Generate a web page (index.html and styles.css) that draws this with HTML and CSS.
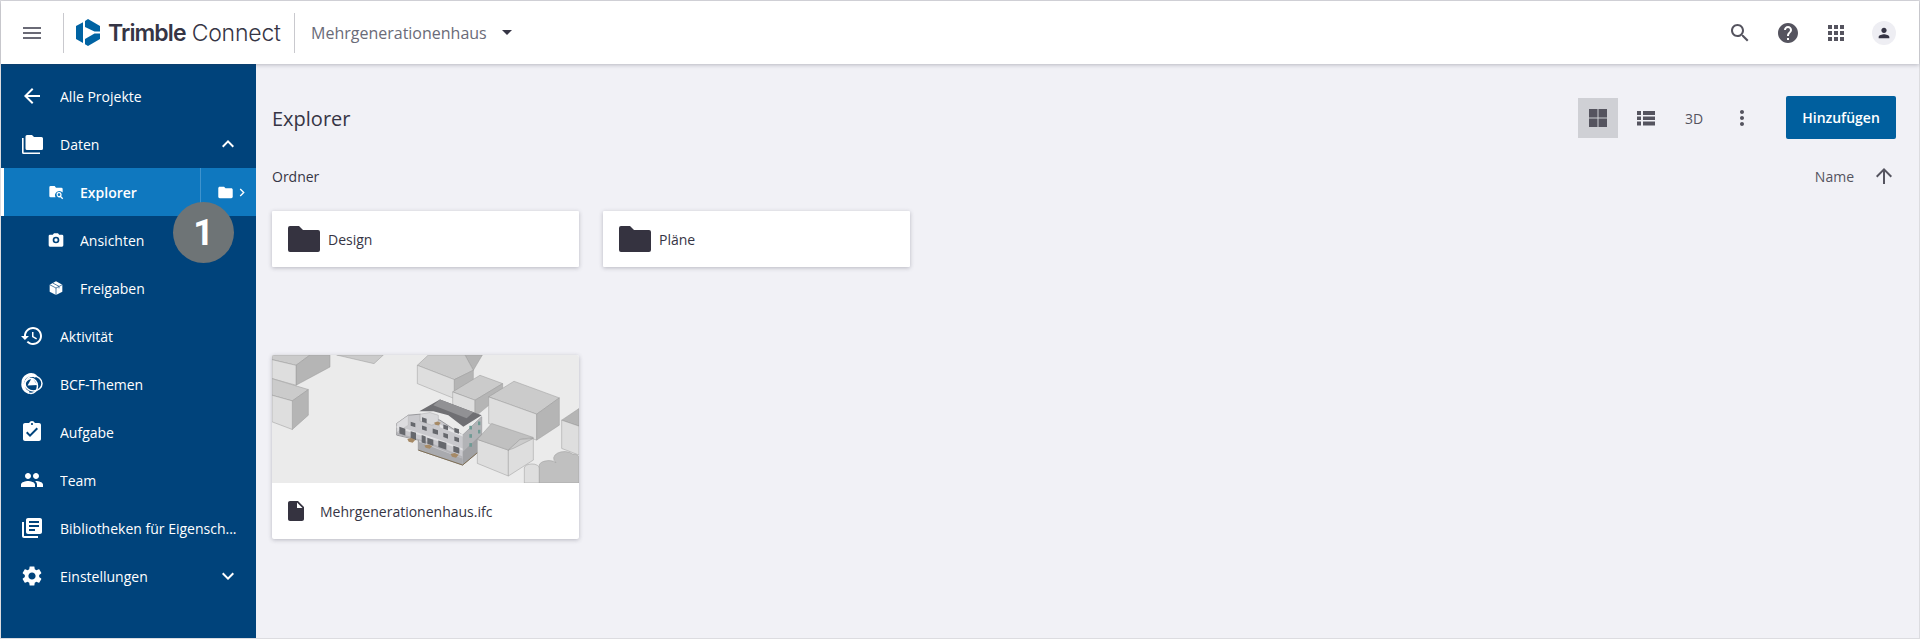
FILE: index.html
```html
<!DOCTYPE html>
<html lang="de">

<head>
    <meta charset="UTF-8">
    <title>Trimble Connect</title>
    <link rel="stylesheet" href="styles.css">
</head>

<body>

    <div class="page">
        <header class="topbar">
            <svg class="icon menu-icon" viewBox="0 0 24 24"><path d="M3 18h18v-2H3v2zm0-5h18v-2H3v2zm0-7v2h18V6H3z"/></svg>
            <div class="brand">
                <svg class="logo" viewBox="0 0 24 27">
                    <path d="M9 2l3-2 12 7v5.500h-5.500L9 8z"/>
                    <path d="M24 14.500V20l-12 7-3-1.700V20l9.500-5.500z"/>
                    <path d="M7 3.300V8v11.500V24l-7-4V7z"/>
                </svg>
                <span class="brand-main">Trimble</span>
                <span class="brand-sub">Connect</span>
            </div>
            <div class="project">
                <span>Mehrgenerationenhaus</span>
                <span class="caret"></span>
            </div>
            <div class="topbar-actions">
                <button class="top-btn"><svg class="icon" viewBox="0 0 24 24"><path d="M15.500 14h-.79l-.28-.27C15.410 12.590 16 11.110 16 9.500 16 5.910 13.090 3 9.500 3S3 5.910 3 9.500 5.910 16 9.500 16c1.610 0 3.090-.59 4.230-1.570l.27.28v.79l5 4.990L20.490 19l-4.990-5zm-6 0C7.010 14 5 11.990 5 9.500S7.010 5 9.500 5 14 7.010 14 9.500 11.990 14 9.500 14z"/></svg></button>
                <button class="top-btn"><svg class="icon" viewBox="0 0 24 24"><path d="M12 2C6.480 2 2 6.480 2 12s4.480 10 10 10 10-4.480 10-10S17.520 2 12 2zm1 17h-2v-2h2v2zm2.070-7.750l-.9.920C13.450 12.900 13 13.500 13 15h-2v-.5c0-1.100.45-2.100 1.170-2.830l1.240-1.260c.37-.36.59-.86.59-1.410 0-1.100-.9-2-2-2s-2 .9-2 2H8c0-2.210 1.790-4 4-4s4 1.790 4 4c0 .88-.36 1.680-.93 2.250z"/></svg></button>
                <button class="top-btn"><svg class="icon" viewBox="0 0 24 24"><path d="M4 8h4V4H4v4zm6 12h4v-4h-4v4zm-6 0h4v-4H4v4zm0-6h4v-4H4v4zm6 0h4v-4h-4v4zm6-10v4h4V4h-4zm-6 4h4V4h-4v4zm6 6h4v-4h-4v4zm0 6h4v-4h-4v4z"/></svg></button>
                <button class="top-btn"><span class="avatar"><svg class="icon icon-small" viewBox="0 0 24 24"><path d="M12 12c2.210 0 4-1.790 4-4s-1.790-4-4-4-4 1.790-4 4 1.790 4 4 4zm0 2c-2.670 0-8 1.340-8 4v2h16v-2c0-2.660-5.330-4-8-4z"/></svg></span></button>
            </div>
        </header>

        <div class="body-row">
            <nav class="sidebar">
                <a class="nav-item">
                    <svg class="icon" viewBox="0 0 24 24"><path d="M20 11H7.830l5.590-5.590L12 4l-8 8 8 8 1.410-1.410L7.830 13H20v-2z"/></svg>
                    <span class="nav-label">Alle Projekte</span>
                </a>
                <a class="nav-item">
                    <svg class="icon" viewBox="0 0 24 24"><path d="M2 6h1.600v14.400H20V22H3.500A1.500 1.500 0 0 1 2 20.500z"/><path d="M7 3h5l2 2h7.500A1.500 1.500 0 0 1 23 6.500v10a1.500 1.500 0 0 1-1.500 1.500H7a1.500 1.500 0 0 1-1.500-1.500v-12A1.500 1.500 0 0 1 7 3z"/></svg>
                    <span class="nav-label">Daten</span>
                    <svg class="icon nav-arrow" viewBox="0 0 24 24"><path d="M12 8l-6 6 1.410 1.410L12 10.830l4.590 4.580L18 14z"/></svg>
                </a>
                <a class="nav-item sub active">
                    <svg class="icon icon-small" viewBox="0 0 24 24"><path d="M10 3l2 2.500h8A2 2 0 0 1 22 7.500v5.300A6.500 6.500 0 0 0 11.300 20H4a2 2 0 0 1-2-2V5a2 2 0 0 1 2-2z"/><path fill-rule="evenodd" d="M16.500 12a4 4 0 0 1 3.300 6.300l3 3-1.400 1.400-3-3A4 4 0 1 1 16.500 12zm0 2a2 2 0 1 0 0 4 2 2 0 0 0 0-4z"/></svg>
                    <span class="nav-label">Explorer</span>
                    <span class="tree-toggle">
                        <svg class="icon icon-folder" viewBox="2 3 20 18"><path d="M10 4H4c-1.100 0-2 .9-2 2v12c0 1.100.9 2 2 2h16c1.100 0 2-.9 2-2V8c0-1.100-.9-2-2-2h-8l-2-2z"/></svg>
                        <svg class="icon icon-chev" viewBox="6 5 12 14"><path d="M10 6L8.590 7.410 13.170 12l-4.580 4.590L10 18l6-6z"/></svg>
                    </span>
                </a>
                <a class="nav-item sub">
                    <svg class="icon icon-small" viewBox="0 0 24 24"><path fill-rule="evenodd" d="M9 2L7.170 4H3a2 2 0 0 0-2 2v14a2 2 0 0 0 2 2h18a2 2 0 0 0 2-2V6a2 2 0 0 0-2-2h-4.170L15 2H9zm3 15a5 5 0 1 1 0-10 5 5 0 0 1 0 10z"/><circle cx="12" cy="12" r="2.500"/></svg>
                    <span class="nav-label">Ansichten</span>
                </a>
                <a class="nav-item sub">
                    <svg class="icon icon-small" viewBox="0 0 24 24"><path d="M12 2l9.500 5v10.500L12 22.500l-9.500-5V7z"/><path class="cube-lines" d="M2.500 7l9.500 5 9.500-5M12 12v10.500M7 4.500l9.500 5v3"/></svg>
                    <span class="nav-label">Freigaben</span>
                </a>
                <a class="nav-item">
                    <svg class="icon" viewBox="0 0 24 24"><path d="M13 3c-4.970 0-9 4.030-9 9H1l3.890 3.890.07.14L9 12H6c0-3.870 3.130-7 7-7s7 3.130 7 7-3.130 7-7 7c-1.930 0-3.680-.79-4.940-2.060l-1.420 1.420C8.270 19.990 10.510 21 13 21c4.970 0 9-4.030 9-9s-4.030-9-9-9zm-1 5v5l4.280 2.540.72-1.210-3.500-2.080V8H12z"/></svg>
                    <span class="nav-label">Aktivität</span>
                </a>
                <a class="nav-item">
                    <svg class="icon" viewBox="0 0 24 24">
                        <path class="bcf-ring" d="M3 11a8 8 0 0 1 13-6.500M9 20.500A8 8 0 0 1 3 11"/>
                        <ellipse class="bcf-ring thin" cx="13.500" cy="11.500" rx="8.500" ry="7.500"/>
                        <ellipse class="bcf-ring thin" cx="11" cy="14" rx="6.500" ry="7.500"/>
                        <path d="M12 5.500l5.500 7.500-10 .5z"/>
                    </svg>
                    <span class="nav-label">BCF-Themen</span>
                </a>
                <a class="nav-item">
                    <svg class="icon" viewBox="0 0 24 24"><path d="M19 3h-4.180C14.400 1.840 13.300 1 12 1c-1.300 0-2.400.84-2.820 2H5c-1.100 0-2 .9-2 2v14c0 1.100.9 2 2 2h14c1.100 0 2-.9 2-2V5c0-1.100-.9-2-2-2zm-7 0c.55 0 1 .45 1 1s-.45 1-1 1-1-.45-1-1 .45-1 1-1zm-2 14l-4-4 1.410-1.410L10 14.170l6.590-6.590L18 9l-8 8z"/></svg>
                    <span class="nav-label">Aufgabe</span>
                </a>
                <a class="nav-item">
                    <svg class="icon" viewBox="0 0 24 24"><path d="M16 11c1.660 0 2.990-1.340 2.990-3S17.660 5 16 5c-1.660 0-3 1.340-3 3s1.340 3 3 3zm-8 0c1.660 0 2.990-1.340 2.990-3S9.660 5 8 5C6.340 5 5 6.340 5 8s1.340 3 3 3zm0 2c-2.330 0-7 1.170-7 3.500V19h14v-2.500c0-2.330-4.670-3.500-7-3.500zm8 0c-.29 0-.62.02-.97.05 1.160.84 1.970 1.970 1.970 3.450V19h6v-2.500c0-2.330-4.670-3.500-7-3.500z"/></svg>
                    <span class="nav-label">Team</span>
                </a>
                <a class="nav-item">
                    <svg class="icon" viewBox="0 0 24 24"><path d="M4 6H2v14c0 1.100.9 2 2 2h14v-2H4V6zm16-4H8c-1.100 0-2 .9-2 2v12c0 1.100.9 2 2 2h12c1.100 0 2-.9 2-2V4c0-1.100-.9-2-2-2zm-1 9H9V9h10v2zm-4 4H9v-2h6v2zm4-8H9V5h10v2z"/></svg>
                    <span class="nav-label">Bibliotheken für Eigensch...</span>
                </a>
                <a class="nav-item">
                    <svg class="icon" viewBox="0 0 24 24"><path d="M19.140 12.940c.04-.3.06-.61.06-.94 0-.32-.02-.64-.07-.94l2.030-1.580c.18-.14.23-.41.12-.61l-1.920-3.320c-.12-.22-.37-.29-.59-.22l-2.390.96c-.5-.38-1.030-.7-1.620-.94l-.36-2.540c-.04-.24-.24-.41-.48-.41h-3.840c-.24 0-.43.17-.47.41l-.36 2.540c-.59.24-1.130.57-1.620.94l-2.390-.96c-.22-.08-.47 0-.59.22L2.740 8.870c-.12.21-.08.47.12.61l2.030 1.580c-.05.3-.09.63-.09.94s.02.64.07.94l-2.030 1.580c-.18.14-.23.41-.12.61l1.920 3.320c.12.22.37.29.59.22l2.390-.96c.5.38 1.030.7 1.620.94l.36 2.540c.05.24.24.41.48.41h3.840c.24 0 .44-.17.47-.41l.36-2.540c.59-.24 1.130-.56 1.620-.94l2.390.96c.22.08.47 0 .59-.22l1.920-3.320c.12-.22.07-.47-.12-.61l-2.010-1.580zM12 15.600c-1.980 0-3.600-1.620-3.600-3.600s1.620-3.600 3.600-3.600 3.600 1.620 3.600 3.600-1.620 3.600-3.600 3.600z"/></svg>
                    <span class="nav-label">Einstellungen</span>
                    <svg class="icon nav-arrow" viewBox="0 0 24 24"><path d="M16.590 8.590L12 13.170 7.410 8.590 6 10l6 6 6-6z"/></svg>
                </a>

                <!-- step marker over the sidebar -->
                <div class="step-badge">1</div>
            </nav>

            <main class="content">
                <div class="toolbar">
                    <h1>Explorer</h1>
                    <div class="view-btns">
                        <button class="view-btn selected"><svg class="icon" viewBox="0 0 24 24"><path d="M3 3h8.500v8.500H3zM12.500 3H21v8.500h-8.500zM3 12.500h8.500V21H3zM12.500 12.500H21V21h-8.500z"/></svg></button>
                        <button class="view-btn"><svg class="icon" viewBox="0 0 24 24"><path d="M3 5h4v4H3zM9 5h12v4H9zM3 10.500h4v3.500H3zM9 10.500h12v3.500H9zM3 15.500h4v4H3zM9 15.500h12v4H9z"/></svg></button>
                        <button class="view-btn text-btn">3D</button>
                        <button class="view-btn"><svg class="icon" viewBox="0 0 24 24"><path d="M12 8c1.100 0 2-.9 2-2s-.9-2-2-2-2 .9-2 2 .9 2 2 2zm0 2c-1.100 0-2 .9-2 2s.9 2 2 2 2-.9 2-2-.9-2-2-2zm0 6c-1.100 0-2 .9-2 2s.9 2 2 2 2-.9 2-2-.9-2-2-2z"/></svg></button>
                    </div>
                    <button class="add-btn">Hinzufügen</button>
                </div>

                <div class="section-head">
                    <span>Ordner</span>
                    <div class="sort">
                        <span>Name</span>
                        <svg class="icon" viewBox="0 0 24 24"><path d="M4 12l1.410 1.410L11 7.830V20h2V7.830l5.580 5.590L20 12l-8-8-8 8z"/></svg>
                    </div>
                </div>

                <div class="folder-grid">
                    <div class="card folder-card">
                        <svg class="folder-icon" viewBox="0 0 32 26"><path d="M0 2a2 2 0 0 1 2-2h9l4 4h15a2 2 0 0 1 2 2v18a2 2 0 0 1-2 2H2a2 2 0 0 1-2-2z"/></svg>
                        <span>Design</span>
                    </div>
                    <div class="card folder-card">
                        <svg class="folder-icon" viewBox="0 0 32 26"><path d="M0 2a2 2 0 0 1 2-2h9l4 4h15a2 2 0 0 1 2 2v18a2 2 0 0 1-2 2H2a2 2 0 0 1-2-2z"/></svg>
                        <span>Pläne</span>
                    </div>
                </div>

                <div class="card file-card">
                    <svg class="thumb" viewBox="36 44 921 385" preserveAspectRatio="none">
                        <rect x="36" y="44" width="921" height="385" fill="#ebebeb"/>
                        <g stroke="#9a9a9a" stroke-width="1.500">
                            <!-- top left blocks -->
                            <path class="face-top" d="M36 44h114l-42 31-72-17z"/>
                            <path class="face-dark" d="M108 75l42-31h60v36l-102 55z"/>
                            <path class="face-light" d="M36 58l72 17v60l-72-20z"/>
                            <path class="face-top" d="M36 115l109 33-48 34-61-17z"/>
                            <path class="face-dark" d="M145 148v77l-48 43v-86z"/>
                            <path class="face-light" d="M36 165l61 17v86l-61-23z"/>
                            <path class="face-top" d="M230 44h140l-28 26z"/>
                            <!-- blocks behind the building -->
                            <path class="face-dark" d="M615 44h52l-27 46z"/>
                            <path class="face-top" d="M472 75l33-31h110l25 46-57 28z"/>
                            <path class="face-light" d="M472 75l111 43v57l-111-45z"/>
                            <path class="face-dark" d="M640 90v55l-57 30v-57z"/>
                            <path class="face-top" d="M578 155l82-50 68 25-83 50z"/>
                            <path class="face-light" d="M578 155l67 25v50l-67-30z"/>
                            <path class="face-dark" d="M645 180l83-50v30l-83 70z"/>
                            <path class="face-top" d="M686 170l76-47 136 50-68 49z"/>
                            <path class="face-light" d="M686 170l144 52v78l-144-50z"/>
                            <path class="face-dark" d="M830 222l68-49v82l-68 45z"/>
                            <!-- right edge -->
                            <path class="face-dark" d="M905 240l52-35v53z"/>
                            <path class="face-light" d="M905 240l52 18v87l-52-20z"/>
                            <path class="face-light" d="M793 429v-45a22 12 0 0 1 45 0v45z"/>
                            <path class="face-mid" d="M838 380a28 15 0 0 1 50-12 28 18 0 0 1 50-26 20 20 0 0 1 19 8v79H838z"/>
                        </g>

                        <!-- the model itself -->
                        <g transform="translate(390 165)">
                            <path d="M20 85l35-25 35-3 60 18 68 45 57-55v97l-57 48L85 165v-30L20 120z" fill="#c9c9cd" stroke="#77777b" stroke-width="2"/>
                            <path d="M218 120l57-55v50l-57 55z" fill="#b2b3b6"/>
                            <path d="M218 170l57-55v47l-57 48z" fill="#a0a1a4"/>
                            <path d="M85 140l133 50v20L85 165z" fill="#a9aaae"/>
                            <path d="M85 165l133 45 57-48" fill="none" stroke="#7f6f55" stroke-width="3"/>
                            <path d="M88 48l62-35 125 47-55 35-45-35-45-12z" fill="#6f6f73"/>
                            <path d="M130 30l20-17 100 38-20 18z" fill="#919194"/>
                            <path d="M90 57l30-5 25 8v25l-20 5-35-12z" fill="#d8d8da" stroke="#8d8d90"/>
                            <path d="M20 85l35-25v30L20 112z" fill="#dcdcdf" stroke="#aaa"/>
                            <path d="M150 88l68 30v6l-68-28z" fill="#e6e6e8"/>
                            <path d="M20 92l130 42 68 26v6l-68-26L20 98z" fill="#e2e2e4"/>
                            <path d="M20 112l100 30 98 42v6L85 135 20 118z" fill="#b4b4b8"/>
                            <g fill="#66686d">
                                <rect width="14" height="12" transform="translate(62 80) skewY(18)"/>
                                <rect width="14" height="12" transform="translate(96 91) skewY(18)"/>
                                <rect width="16" height="14" transform="translate(128 100) skewY(18)"/>
                                <rect width="14" height="13" transform="translate(160 88) skewY(18)"/>
                                <rect width="14" height="13" transform="translate(193 98) skewY(18)"/>
                                <rect width="14" height="13" transform="translate(160 113) skewY(18)"/>
                                <rect width="14" height="13" transform="translate(193 124) skewY(18)"/>
                                <rect width="14" height="14" transform="translate(96 66) skewY(18)"/>
                                <rect width="18" height="20" transform="translate(28 95) skewY(18)"/>
                                <rect width="16" height="22" transform="translate(62 108) skewY(18)"/>
                                <rect width="12" height="22" transform="translate(95 120) skewY(18)"/>
                                <rect width="24" height="20" transform="translate(145 136) skewY(18)"/>
                                <rect width="18" height="18" transform="translate(190 152) skewY(18)"/>
                                <rect width="18" height="18" transform="translate(112 128) skewY(18)"/>
                            </g>
                            <g fill="#6f9a94">
                                <rect x="238" y="92" width="8" height="11"/>
                                <rect x="264" y="79" width="7" height="11"/>
                                <rect x="238" y="117" width="8" height="11"/>
                                <rect x="264" y="104" width="7" height="11"/>
                                <rect x="238" y="144" width="8" height="11"/>
                            </g>
                            <g fill="#a68a66">
                                <path d="M52 132l12-3 12 5-8 9-12-3z"/>
                                <path d="M103 151l12-3 12 5-8 8-12-3z"/>
                                <path d="M182 177l12-3 12 5-8 9-12-3z"/>
                                <path d="M132 83l10-4 10 4-6 8-10-2z"/>
                            </g>
                        </g>

                        <!-- house in front of the model -->
                        <g stroke="#9a9a9a" stroke-width="1.500">
                            <path class="face-light" d="M652 298l93 32v78l-93-38z"/>
                            <path class="face-light" d="M745 330l40-30 35-5v65l-75 48z"/>
                            <path class="face-mid" d="M652 298l43-48 90 30 35 12-40 6-35 32z"/>
                            <path class="face-top" d="M745 330l35-32 40-3-60 30z"/>
                        </g>
                    </svg>
                    <div class="file-row">
                        <svg class="file-icon" viewBox="4 2 16 20"><path d="M6 2c-1.100 0-1.990.9-1.990 2L4 20c0 1.100.89 2 1.990 2H18c1.100 0 2-.9 2-2V8l-6-6H6zm7 7V3.500L18.500 9H13z"/></svg>
                        <span>Mehrgenerationenhaus.ifc</span>
                    </div>
                </div>
            </main>
        </div>
    </div>

</body>

</html>
```

FILE: styles.css
```css
* {
    margin: 0;
    padding: 0;
    box-sizing: border-box;
}

body {
    font-family: "Open Sans", sans-serif;
    font-size: 14px;
    color: #363545;
    height: 639px;
    overflow: hidden;
}

button {
    font-family: inherit;
    border: none;
    background: none;
    cursor: pointer;
}

.page {
    height: 639px;
    border: 1px solid #dcdce0;
    display: flex;
    flex-direction: column;
}

.icon {
    width: 24px;
    height: 24px;
    fill: currentColor;
    flex-shrink: 0;
}

.icon-small {
    width: 16px;
    height: 16px;
}

/* top bar */
.topbar {
    position: relative;
    z-index: 2;
    height: 63px;
    flex-shrink: 0;
    background: #fff;
    box-shadow: 0 1px 4px rgba(54, 53, 69, 0.3);
    display: flex;
    align-items: center;
    padding: 0 17px 0 19px;
}

.menu-icon {
    color: #6a6a76;
}

.brand {
    height: 40px;
    margin-left: 19px;
    padding: 0 12px;
    border-left: 1px solid #c9c9ce;
    border-right: 1px solid #c9c9ce;
    display: flex;
    align-items: center;
    width: 232px;
}

.logo {
    width: 24px;
    height: 27px;
    fill: #0063a3;
    flex-shrink: 0;
}

.brand-main {
    margin-left: 8px;
    font-family: "Inter", sans-serif;
    font-size: 23px;
    font-weight: 600;
    color: #363545;
    letter-spacing: -0.9px;
}

.brand-sub {
    margin-left: 6px;
    font-family: "Inter", sans-serif;
    font-size: 23px;
    font-weight: 300;
    color: #363545;
    letter-spacing: -0.2px;
}

.project {
    margin-left: 16px;
    font-size: 16px;
    color: #6a6b78;
    display: flex;
    align-items: center;
}

.caret {
    margin-left: 15px;
    width: 0;
    height: 0;
    border-left: 5px solid transparent;
    border-right: 5px solid transparent;
    border-top: 5px solid #363545;
}

.topbar-actions {
    margin-left: auto;
    display: flex;
    gap: 12px;
}

.top-btn {
    width: 36px;
    height: 36px;
    color: #55545f;
    display: flex;
    align-items: center;
    justify-content: center;
}

.avatar {
    width: 24px;
    height: 24px;
    border-radius: 50%;
    background: #eeeef3;
    display: flex;
    align-items: center;
    justify-content: center;
    color: #363545;
}

.body-row {
    flex: 1;
    min-height: 0;
    display: flex;
}

/* sidebar */
.sidebar {
    position: relative;
    width: 255px;
    flex-shrink: 0;
    background: #00437b;
    color: #fff;
    padding-top: 8px;
}

.nav-item {
    height: 48px;
    display: flex;
    align-items: center;
    padding-left: 19px;
}

.nav-label {
    margin-left: 16px;
    flex: 1;
    min-width: 0;
    white-space: nowrap;
    overflow: hidden;
    text-overflow: ellipsis;
    padding-right: 16px;
}

.nav-arrow {
    margin-right: 16px;
}

.nav-item.sub {
    padding-left: 47px;
}

.nav-item.sub .nav-label {
    margin-left: 16px;
}

.nav-item.active {
    background: #0f78bf;
    box-shadow: inset 3px 0 0 #fff;
}

.nav-item.active .nav-label {
    font-weight: 600;
}

.tree-toggle {
    height: 48px;
    width: 56px;
    border-left: 1px solid #3f93cd;
    display: flex;
    align-items: center;
    padding-left: 17px;
    gap: 5px;
}

.icon-folder {
    width: 15px;
    height: 13px;
}

.icon-chev {
    width: 8px;
    height: 11px;
}

.cube-lines {
    fill: none;
    stroke: #00437b;
    stroke-width: 1;
}

.bcf-ring {
    fill: none;
    stroke: #fff;
    stroke-width: 3;
}

.bcf-ring.thin {
    stroke-width: 1.5;
}

.step-badge {
    position: absolute;
    left: 172px;
    top: 138px;
    width: 61px;
    height: 61px;
    border-radius: 50%;
    background: #6e7476;
    color: #fff;
    font-family: "Roboto", sans-serif;
    font-size: 36px;
    font-weight: 700;
    display: flex;
    align-items: center;
    justify-content: center;
}

/* main area */
.content {
    flex: 1;
    min-width: 0;
    background: #f1f1f6;
    padding: 32px 23px 0 16px;
}

.toolbar {
    height: 44px;
    display: flex;
    align-items: center;
}

.toolbar h1 {
    font-size: 20px;
    font-weight: 400;
    color: #363545;
}

.view-btns {
    margin-left: auto;
    display: flex;
    gap: 8px;
    margin-right: 24px;
}

.view-btn {
    width: 40px;
    height: 40px;
    color: #55545f;
    display: flex;
    align-items: center;
    justify-content: center;
}

.view-btn.selected {
    background: #cfd0d5;
}

.text-btn {
    font-size: 14px;
}

.add-btn {
    width: 110px;
    height: 43px;
    margin-bottom: 1px;
    background: #005f9e;
    color: #fff;
    font-size: 14px;
    font-weight: 600;
    border-radius: 2px;
}

.section-head {
    margin-top: 24px;
    height: 24px;
    display: flex;
    align-items: center;
    justify-content: space-between;
}

.sort {
    display: flex;
    align-items: center;
    gap: 18px;
    color: #55545f;
}

.card {
    width: 307px;
    background: #fff;
    box-shadow: 0 1px 4px rgba(54, 53, 69, 0.3);
    border-radius: 1px;
}

.folder-grid {
    margin-top: 23px;
    display: flex;
    gap: 24px;
}

.folder-card {
    height: 56px;
    display: flex;
    align-items: center;
    padding-left: 16px;
}

.folder-icon {
    width: 32px;
    height: 26px;
    fill: #353340;
    margin-right: 8px;
}

.file-card {
    margin-top: 88px;
    height: 184px;
    overflow: hidden;
    border-radius: 2px;
}

.thumb {
    display: block;
    width: 307px;
    height: 128px;
}

.face-top {
    fill: #cbcbcb;
}

.face-light {
    fill: #dedede;
}

.face-mid {
    fill: #c0c0c0;
}

.face-dark {
    fill: #b5b5b5;
}

.file-row {
    height: 56px;
    display: flex;
    align-items: center;
    padding-left: 16px;
}

.file-icon {
    width: 16px;
    height: 20px;
    fill: #353340;
    margin-right: 16px;
}
```
